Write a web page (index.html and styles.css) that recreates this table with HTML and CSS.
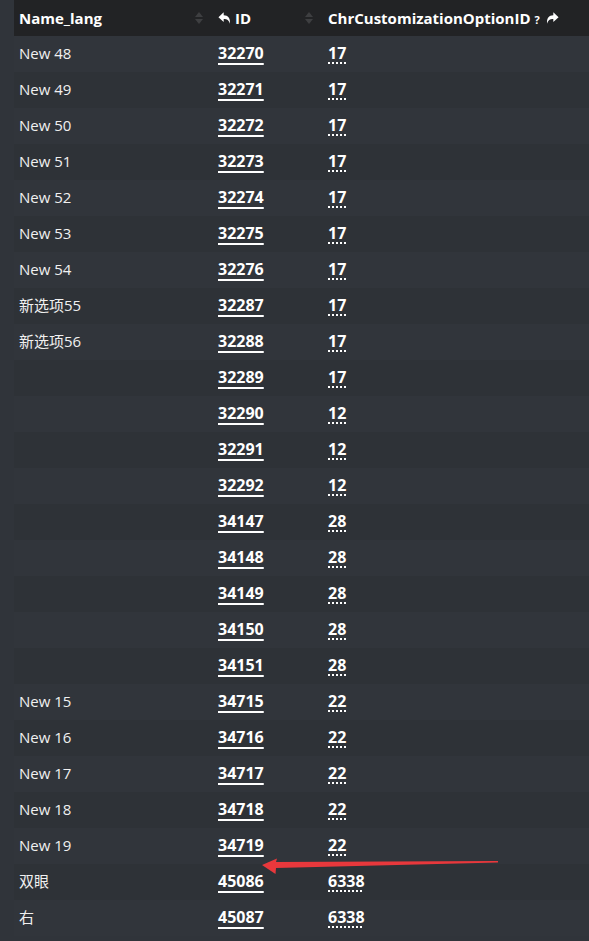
FILE: index.html
```html
<!DOCTYPE html>
<html>
<head>
  <meta charset="utf-8">
  <title>ChrCustomizationChoice</title>
  <link rel="stylesheet" href="styles.css">
</head>
<body>
  <div class="wrap">
    <table class="db-table">
      <thead>
        <tr>
          <th class="col-name">Name_lang<span class="sort"></span></th>
          <th class="col-id">
            <svg class="ico" viewBox="0 0 16 16"><path d="M6.5 1.5 L0.5 7 L6.5 12.5 V9.2 C10.5 9.2 12.5 10.5 13.5 14.5 C14.5 8.5 11.5 4.8 6.5 4.8 Z"/></svg>ID<span class="sort"></span>
          </th>
          <th class="col-opt">ChrCustomizationOptionID <span class="q">?</span>
            <svg class="ico" viewBox="0 0 16 16"><path d="M9.5 1.5 L15.5 7 L9.5 12.5 V9.2 C5.5 9.2 3.5 10.5 2.5 14.5 C1.5 8.5 4.5 4.8 9.5 4.8 Z"/></svg>
          </th>
        </tr>
      </thead>
      <tbody id="rows"></tbody>
    </table>

    <svg class="pointer" viewBox="0 0 240 26" width="240" height="26">
      <path d="M2 13 L17 6.5 L16 10 L238 9 L238 10.5 L16 16 L15.5 22 Z" fill="#e8383c"/>
    </svg>
  </div>

  <script>
    const data = [
      ['New 48', 32270, 17], ['New 49', 32271, 17], ['New 50', 32272, 17],
      ['New 51', 32273, 17], ['New 52', 32274, 17], ['New 53', 32275, 17],
      ['New 54', 32276, 17], ['新选项55', 32287, 17], ['新选项56', 32288, 17],
      ['', 32289, 17], ['', 32290, 12], ['', 32291, 12], ['', 32292, 12],
      ['', 34147, 28], ['', 34148, 28], ['', 34149, 28], ['', 34150, 28],
      ['', 34151, 28], ['New 15', 34715, 22], ['New 16', 34716, 22],
      ['New 17', 34717, 22], ['New 18', 34718, 22], ['New 19', 34719, 22],
      ['双眼', 45086, 6338], ['右', 45087, 6338]
    ];

    const tbody = document.getElementById('rows');
    data.forEach(([name, id, opt]) => {
      const tr = document.createElement('tr');
      tr.innerHTML = `
        <td>${name}</td>
        <td><a class="id-link">${id}</a></td>
        <td><span class="fk-link">${opt}</span></td>
      `;
      tbody.appendChild(tr);
    });
  </script>
</body>
</html>
```

FILE: styles.css
```css
body {
  margin: 0;
  background-color: #30343a;
  font-family: "Open Sans", "Noto Sans CJK SC", sans-serif;
  font-size: 15px;
  color: #f0f0f0;
}
.wrap {
  position: relative;
  padding-left: 14px;
}
.db-table {
  width: 100%;
  border-collapse: collapse;
}
thead tr {
  height: 36px;
}
th {
  background-color: #222325;
  color: #fff;
  font-weight: 700;
  text-align: left;
  padding: 0 5px;
  position: relative;
  white-space: nowrap;
}
.col-name { width: 189px; }
.col-id { width: 100px; }
.sort {
  position: absolute;
  right: 10px;
  top: 12px;
  width: 0;
  height: 0;
  border-left: 4px solid transparent;
  border-right: 4px solid transparent;
  border-bottom: 5px solid #3e3f41;
}
.sort::after {
  content: "";
  position: absolute;
  left: -4px;
  top: 7px;
  border-left: 4px solid transparent;
  border-right: 4px solid transparent;
  border-top: 5px solid #3e3f41;
}
.ico {
  width: 14px;
  height: 14px;
  fill: #fff;
  vertical-align: -1px;
  margin-right: 3px;
}
.col-opt .ico {
  margin-left: 1px;
}
.q {
  font-size: 11px;
}
tbody tr {
  height: 36px;
}
td {
  padding: 0 5px 3px;
  white-space: nowrap;
}
tbody tr:nth-child(odd) td {
  background-color: #31353b;
}
tbody tr:nth-child(even) td {
  background-color: #2e3237;
}
.id-link,
.fk-link {
  font-size: 16px;
  font-weight: 700;
  color: #fff;
  text-decoration: underline;
  text-decoration-thickness: 2px;
  text-underline-offset: 4px;
}
.fk-link {
  text-decoration-style: dotted;
}
.pointer {
  position: absolute;
  left: 260px;
  top: 852px;
}
```
